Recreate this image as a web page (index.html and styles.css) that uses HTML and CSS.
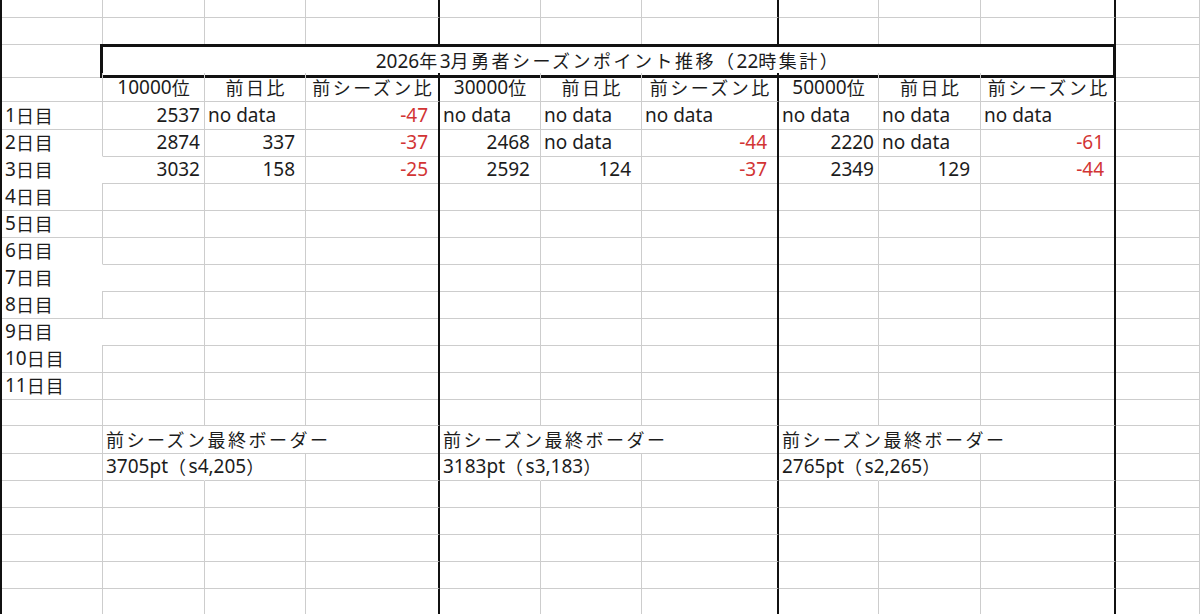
FILE: index.html
```html
<!DOCTYPE html>
<html lang="ja">
<head>
<meta charset="utf-8">
<title>2026年3月勇者シーズンポイント推移</title>
<link rel="stylesheet" href="styles.css">
</head>
<body>
<div class="sheet">
  <div class="row"><div class="c"></div><div class="c"></div><div class="c"></div><div class="c"></div><div class="c"></div><div class="c"></div><div class="c"></div><div class="c"></div><div class="c"></div><div class="c"></div><div class="c"></div></div>
  <div class="row"><div class="c"></div><div class="c"></div><div class="c"></div><div class="c"></div><div class="c"></div><div class="c"></div><div class="c"></div><div class="c"></div><div class="c"></div><div class="c"></div><div class="c"></div></div>
  <div class="row title-row">
    <div class="c"></div>
    <div class="title">2026<span class="ja">年</span>3<span class="ja">月勇者シーズンポイント推移（</span>22<span class="ja">時集計）</span></div>
    <div class="c"></div>
  </div>
  <div class="row">
    <div class="c"></div>
    <div class="c ctr">10000<span class="ja">位</span></div><div class="c ctr"><span class="ja">前日比</span></div><div class="c ctr"><span class="ja">前シーズン比</span></div>
    <div class="c ctr">30000<span class="ja">位</span></div><div class="c ctr"><span class="ja">前日比</span></div><div class="c ctr"><span class="ja">前シーズン比</span></div>
    <div class="c ctr">50000<span class="ja">位</span></div><div class="c ctr"><span class="ja">前日比</span></div><div class="c ctr"><span class="ja">前シーズン比</span></div>
    <div class="c"></div>
  </div>
  <div class="row">
    <div class="c lbl">1<span class="ja">日目</span></div>
    <div class="c num">2537</div><div class="c">no data</div><div class="c val neg">-47</div>
    <div class="c">no data</div><div class="c">no data</div><div class="c">no data</div>
    <div class="c">no data</div><div class="c">no data</div><div class="c gr">no data</div>
    <div class="c"></div>
  </div>
  <div class="row">
    <div class="c lbl nbb">2<span class="ja">日目</span></div>
    <div class="c num">2874</div><div class="c val">337</div><div class="c val neg">-37</div>
    <div class="c val">2468</div><div class="c">no data</div><div class="c val neg">-44</div>
    <div class="c num">2220</div><div class="c">no data</div><div class="c val neg">-61</div>
    <div class="c"></div>
  </div>
  <div class="row">
    <div class="c lbl nbb nbr">3<span class="ja">日目</span></div>
    <div class="c num">3032</div><div class="c val">158</div><div class="c val neg">-25</div>
    <div class="c val">2592</div><div class="c val">124</div><div class="c val neg">-37</div>
    <div class="c num">2349</div><div class="c val">129</div><div class="c val neg">-44</div>
    <div class="c"></div>
  </div>
  <div class="row"><div class="c lbl">4<span class="ja">日目</span></div><div class="c"></div><div class="c"></div><div class="c"></div><div class="c"></div><div class="c"></div><div class="c"></div><div class="c"></div><div class="c"></div><div class="c"></div><div class="c"></div></div>
  <div class="row"><div class="c lbl">5<span class="ja">日目</span></div><div class="c"></div><div class="c"></div><div class="c"></div><div class="c"></div><div class="c"></div><div class="c"></div><div class="c"></div><div class="c"></div><div class="c"></div><div class="c"></div></div>
  <div class="row"><div class="c lbl nbb">6<span class="ja">日目</span></div><div class="c"></div><div class="c"></div><div class="c"></div><div class="c"></div><div class="c"></div><div class="c"></div><div class="c"></div><div class="c"></div><div class="c"></div><div class="c"></div></div>
  <div class="row"><div class="c lbl nbb nbr">7<span class="ja">日目</span></div><div class="c"></div><div class="c"></div><div class="c"></div><div class="c"></div><div class="c"></div><div class="c"></div><div class="c"></div><div class="c"></div><div class="c"></div><div class="c"></div></div>
  <div class="row"><div class="c lbl">8<span class="ja">日目</span></div><div class="c"></div><div class="c"></div><div class="c"></div><div class="c"></div><div class="c"></div><div class="c"></div><div class="c"></div><div class="c"></div><div class="c"></div><div class="c"></div></div>
  <div class="row"><div class="c lbl nbb nbr">9<span class="ja">日目</span></div><div class="c"></div><div class="c"></div><div class="c"></div><div class="c"></div><div class="c"></div><div class="c"></div><div class="c"></div><div class="c"></div><div class="c"></div><div class="c"></div></div>
  <div class="row"><div class="c lbl">10<span class="ja">日目</span></div><div class="c"></div><div class="c"></div><div class="c"></div><div class="c"></div><div class="c"></div><div class="c"></div><div class="c"></div><div class="c"></div><div class="c"></div><div class="c"></div></div>
  <div class="row"><div class="c lbl">11<span class="ja">日目</span></div><div class="c"></div><div class="c"></div><div class="c"></div><div class="c"></div><div class="c"></div><div class="c"></div><div class="c"></div><div class="c"></div><div class="c"></div><div class="c"></div></div>
  <div class="row"><div class="c"></div><div class="c"></div><div class="c"></div><div class="c"></div><div class="c"></div><div class="c"></div><div class="c"></div><div class="c"></div><div class="c"></div><div class="c"></div><div class="c"></div></div>
  <div class="row">
    <div class="c"></div>
    <div class="c nbr"><span class="ja">前シーズン最終ボーダー</span></div><div class="c nbr"></div><div class="c gr"></div>
    <div class="c nbr"><span class="ja">前シーズン最終ボーダー</span></div><div class="c nbr"></div><div class="c gr"></div>
    <div class="c nbr"><span class="ja">前シーズン最終ボーダー</span></div><div class="c nbr"></div><div class="c gr"></div>
    <div class="c"></div>
  </div>
  <div class="row">
    <div class="c"></div>
    <div class="c nbr">3705pt<span class="ja">（</span>s4,205<span class="ja">）</span></div><div class="c"></div><div class="c gr"></div>
    <div class="c nbr">3183pt<span class="ja">（</span>s3,183<span class="ja">）</span></div><div class="c"></div><div class="c gr"></div>
    <div class="c nbr">2765pt<span class="ja">（</span>s2,265<span class="ja">）</span></div><div class="c"></div><div class="c gr"></div>
    <div class="c"></div>
  </div>
  <div class="row"><div class="c"></div><div class="c"></div><div class="c"></div><div class="c"></div><div class="c"></div><div class="c"></div><div class="c"></div><div class="c"></div><div class="c"></div><div class="c"></div><div class="c"></div></div>
  <div class="row"><div class="c"></div><div class="c"></div><div class="c"></div><div class="c"></div><div class="c"></div><div class="c"></div><div class="c"></div><div class="c"></div><div class="c"></div><div class="c"></div><div class="c"></div></div>
  <div class="row"><div class="c"></div><div class="c"></div><div class="c"></div><div class="c"></div><div class="c"></div><div class="c"></div><div class="c"></div><div class="c"></div><div class="c"></div><div class="c"></div><div class="c"></div></div>
  <div class="row"><div class="c"></div><div class="c"></div><div class="c"></div><div class="c"></div><div class="c"></div><div class="c"></div><div class="c"></div><div class="c"></div><div class="c"></div><div class="c"></div><div class="c"></div></div>
  <div class="row"><div class="c"></div><div class="c"></div><div class="c"></div><div class="c"></div><div class="c"></div><div class="c"></div><div class="c"></div><div class="c"></div><div class="c"></div><div class="c"></div><div class="c"></div></div>
</div>
</body>
</html>
```
FILE: styles.css
```css
:root {
  --grid: #cdcdcd;
  --ink: #1c1c1c;
  --cols: 101px 102px 101px 134px 101px 101px 137px 100px 102px 135px 1fr;
}

html, body {
  margin: 0;
  padding: 0;
  background: #ffffff;
  overflow: hidden;
}

body {
  width: 1200px;
  height: 614px;
  font-family: "Noto Sans", "Noto Sans CJK JP", sans-serif;
  font-size: 19px;
  color: var(--ink);
}

.ja {
  font-family: "Noto Sans CJK JP", sans-serif;
  font-size: 18px;
  font-weight: 400;
  letter-spacing: 2.5px;
}

.lbl .ja {
  letter-spacing: 1px;
}

.sheet {
  display: grid;
  grid-template-rows: 18px 27px 28px 28.5px 27px repeat(18, 27.08px);
  border-left: 2px solid #111;
  height: 616px;
}

.row {
  display: grid;
  grid-template-columns: var(--cols);
  min-height: 0;
}

.c {
  box-sizing: border-box;
  display: flex;
  align-items: flex-end;
  justify-content: flex-start;
  padding: 0 3px;
  line-height: 27px;
  white-space: nowrap;
  min-width: 0;
  border-right: 1px solid var(--grid);
  border-bottom: 1px solid var(--grid);
}

.row:not(.title-row) > .c:nth-child(3n+4) {
  border-right: 2px solid #111;
}

.row > .c.gr {
  border-right: 1px solid var(--grid);
}

.row > .c.nbr {
  border-right-color: transparent;
}

.c.nbb {
  border-bottom-color: transparent;
}

.ctr {
  justify-content: center;
}

.ctr .ja {
  margin-right: -2.5px;
}

.num {
  justify-content: flex-end;
  padding-right: 4px;
}

.val {
  justify-content: flex-end;
  padding-right: 10px;
}

.neg {
  color: #d23434;
}

.title {
  grid-column: 2 / 11;
  box-sizing: border-box;
  margin: -1px 0 0 -3px;
  border: 3px solid #111;
  text-align: center;
  line-height: 27px;
  white-space: nowrap;
}
```
